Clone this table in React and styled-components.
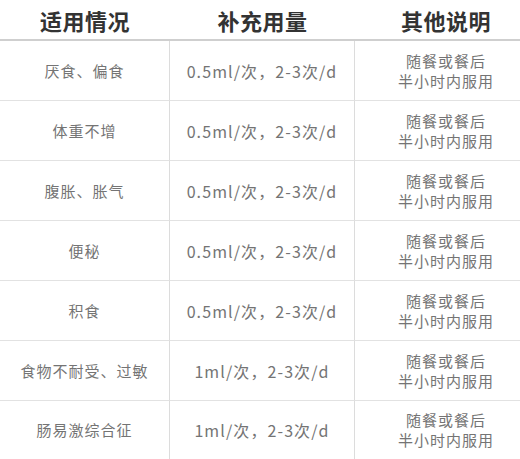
import React from "react";
import styled, { createGlobalStyle } from "styled-components";

const Global = createGlobalStyle`
  html, body { margin: 0; padding: 0; background: #ffffff; }
  body { font-family: "Noto Sans CJK SC", "Noto Sans", sans-serif; overflow: hidden; }
`;

const Frame = styled.div`
  width: 520px;
  overflow: hidden;
`;

const Table = styled.div`
  width: 537px;
  display: grid;
  grid-template-columns: 170px 185px 182px;
  background: #fff;
`;

const HeadCell = styled.div`
  height: 39px;
  display: flex;
  align-items: center;
  justify-content: center;
  font-size: 22px;
  font-weight: 700;
  color: #333333;
  letter-spacing: 0.5px;
  border-bottom: 2px solid #cfcfcf;
`;

const Cell = styled.div`
  height: ${(p) => (p.$last ? "58px" : "59px")};
  display: flex;
  flex-direction: column;
  align-items: center;
  justify-content: center;
  font-size: ${(p) => p.$size || "15px"};
  line-height: 20px;
  color: #747474;
  letter-spacing: ${(p) => p.$spacing || "1px"};
  text-align: center;
  border-bottom: ${(p) => (p.$last ? "none" : "1px solid #e2e2e2")};
  border-right: ${(p) => (p.$divider ? "1px solid #dcdcdc" : "none")};
  padding-bottom: ${(p) => (p.$last ? "1px" : "0")};
`;

const Note = styled.div`
  display: block;
  line-height: 20px;
`;

const rows = [
  ["厌食、偏食", "0.5ml/次，2-3次/d"],
  ["体重不增", "0.5ml/次，2-3次/d"],
  ["腹胀、胀气", "0.5ml/次，2-3次/d"],
  ["便秘", "0.5ml/次，2-3次/d"],
  ["积食", "0.5ml/次，2-3次/d"],
  ["食物不耐受、过敏", "1ml/次，2-3次/d"],
  ["肠易激综合征", "1ml/次，2-3次/d"],
];

export default function App() {
  return (
    <>
      <Global />
      <Frame>
        <Table>
          <HeadCell>适用情况</HeadCell>
          <HeadCell>补充用量</HeadCell>
          <HeadCell>其他说明</HeadCell>
          {rows.map(([a, b], i) => {
            const last = i === rows.length - 1;
            return (
              <React.Fragment key={i}>
                <Cell $divider $last={last}>{a}</Cell>
                <Cell $divider $last={last} $size="16px" $spacing="1.1px">{b}</Cell>
                <Cell $last={last}>
                  <Note>
                    随餐或餐后
                    <br />
                    半小时内服用
                  </Note>
                </Cell>
              </React.Fragment>
            );
          })}
        </Table>
      </Frame>
    </>
  );
}
